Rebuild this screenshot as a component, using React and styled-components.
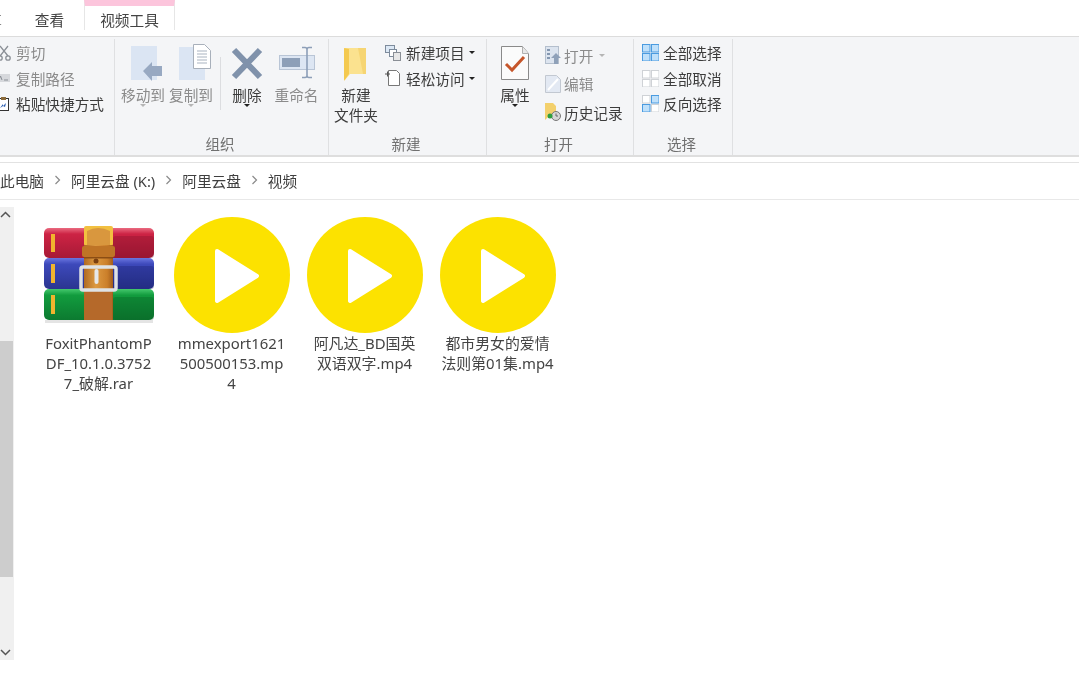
import React from 'react';
import styled, { createGlobalStyle } from 'styled-components';

const GlobalStyle = createGlobalStyle`
  html, body {
    margin: 0;
    padding: 0;
    background: #fff;
    overflow: hidden;
  }
  body {
    font-family: "Noto Sans", "Noto Sans CJK SC", sans-serif;
    font-size: 14.67px;
    color: #3c3c3c;
  }
`;

const Page = styled.div`
  width: 1079px;
  height: 673px;
  overflow: hidden;
  filter: blur(0.35px);
`;

const TabBar = styled.div`
  height: 36px;
  display: flex;
  align-items: stretch;
`;

const Tab = styled.div`
  width: ${p => p.$w}px;
  height: 30px;
  box-sizing: border-box;
  text-align: center;
  line-height: 40px;
  color: #444;
  ${p => p.$context && `
    border-top: 6px solid #fcc5dc;
    border-left: 1px solid #e6e6e6;
    border-right: 1px solid #e6e6e6;
    line-height: 28px;
  `}
`;

const ClippedTab = styled.div`
  width: 22px;
  height: 30px;
  box-sizing: border-box;
  display: flex;
  justify-content: flex-end;
  padding-right: 20px;
  line-height: 40px;
  white-space: nowrap;
  color: #888;
`;

const Ribbon = styled.div`
  height: 121px;
  box-sizing: border-box;
  display: flex;
  padding-top: 2px;
  background: #f4f5f7;
  border-top: 1px solid #dcdcdc;
  border-bottom: 2px solid #dedede;
`;

const Group = styled.div`
  width: ${p => p.$w}px;
  flex: none;
  box-sizing: border-box;
  display: flex;
  flex-direction: column;
  border-right: 1px solid #dfe0e2;
`;

const GroupBody = styled.div`
  flex: 1;
  display: flex;
  align-items: flex-start;
  padding-left: ${p => p.$pad || 0}px;
`;

const Caption = styled.div`
  height: 21px;
  padding-right: 3px;
  line-height: 20px;
  text-align: center;
  font-size: 14.5px;
  color: #707070;
`;

const LargeButton = styled.div`
  width: ${p => p.$w}px;
  flex: none;
  display: flex;
  flex-direction: column;
  align-items: center;
  margin-left: ${p => p.$left || 0}px;
  padding-top: 5px;
  line-height: 20px;
  white-space: nowrap;
  color: ${p => (p.$off ? '#8b8b8b' : '#3c3c3c')};
  svg {
    display: block;
    margin-bottom: 1px;
  }
`;

const Caret = styled.span`
  width: 0;
  height: 0;
  margin-top: -1px;
  border-left: 3px solid transparent;
  border-right: 3px solid transparent;
  border-top: 3px solid ${p => (p.$off ? '#b5b5b5' : '#222')};
`;

const InlineCaret = styled(Caret)`
  margin: 0 0 0 ${p => p.$gap}px;
`;

const VSep = styled.div`
  width: 1px;
  height: 53px;
  flex: none;
  margin: 18px 0 0 7px;
  background: #dcdde0;
`;

const SmallColumn = styled.div`
  display: flex;
  flex-direction: column;
  margin-left: ${p => p.$left || 0}px;
  padding-top: ${p => p.$top || 1}px;
`;

const SmallRow = styled.div`
  height: ${p => p.$h || 25.5}px;
  display: flex;
  align-items: center;
  gap: ${p => p.$gap || 3}px;
  white-space: nowrap;
  color: ${p => (p.$off ? '#8b8b8b' : '#3c3c3c')};
  svg {
    flex: none;
    display: block;
    margin-left: ${p => p.$shift || 0}px;
  }
`;

const AddressGap = styled.div`
  height: 5px;
`;

const AddressBar = styled.div`
  height: 36px;
  display: flex;
  align-items: center;
  border-top: 1px solid #e2e2e2;
  border-bottom: 1px solid #e8e8e8;
  color: #3f3f3f;
  span {
    margin-top: -2px;
  }
`;

const Crumb = styled.svg`
  width: 27px;
  height: 10px;
  flex: none;
  margin-top: -2px;
`;

const Content = styled.div`
  display: flex;
  align-items: flex-start;
  padding-top: 7px;
`;

const ScrollBar = styled.div`
  width: 14px;
  height: 453px;
  flex: none;
  display: flex;
  flex-direction: column;
  background: #f0f0f0;
`;

const ScrollArrow = styled.div`
  height: ${p => p.$h}px;
  display: flex;
  align-items: ${p => p.$align};
  padding: 4px 0;
  box-sizing: border-box;
  svg {
    display: block;
  }
`;

const ScrollThumb = styled.div`
  width: 13px;
  height: 236px;
  background: #cdcdcd;
`;

const FileGrid = styled.div`
  display: flex;
  padding: 10px 0 0 18px;
`;

const FileItem = styled.div`
  width: 133px;
  display: flex;
  flex-direction: column;
  align-items: center;
  svg {
    display: block;
  }
`;

const FileName = styled.div`
  text-align: center;
  line-height: 20px;
  color: #444;
  white-space: nowrap;
  font-size: 14.9px;
  span {
    display: block;
  }
`;

const ScissorsIcon = () => (
  <svg width="16" height="16" viewBox="0 0 16 16" fill="none" stroke="#8a8f96" strokeWidth="1.3">
    <path d="M3 1l8 10M11 1L3 11" />
    <circle cx="3" cy="13" r="2.2" />
    <circle cx="11" cy="13" r="2.2" />
  </svg>
);

const PathIcon = () => (
  <svg width="16" height="16" viewBox="0 0 16 16">
    <rect x="0" y="4" width="13" height="8" fill="#d6d8dc" />
    <path d="M2 10l1.5-4L5 10M7 10h4" stroke="#8a8f96" fill="none" />
  </svg>
);

const ShortcutIcon = () => (
  <svg width="16" height="16" viewBox="0 0 16 16">
    <rect x="1.5" y="2.5" width="10" height="12" fill="#fff" stroke="#333" />
    <rect x="4" y="1" width="5" height="3" fill="#8a6a3a" />
    <path d="M3 12l3-4 0 2 3-3-1 4-2-1z" fill="#2a5db0" />
  </svg>
);

const MoveIcon = () => (
  <svg width="44" height="40" viewBox="0 0 44 40">
    <rect x="10" y="2" width="26" height="34" fill="#dbe5f3" />
    <path d="M22 27l9-9v4h10v10H31v5z" fill="#98a9c2" />
  </svg>
);

const CopyIcon = () => (
  <svg width="44" height="40" viewBox="0 0 44 40">
    <rect x="10" y="3" width="26" height="33" fill="#dbe5f3" />
    <path d="M24.5 .5h11l6 6v18h-17z" fill="#fff" stroke="#a8b0bb" />
    <path d="M28 7h10M28 10h10M28 13h10M28 16h10M28 19h10" stroke="#a9b3c0" />
  </svg>
);

const DeleteIcon = () => (
  <svg width="52" height="40" viewBox="0 0 52 40">
    <path d="M13 6l26 27M39 6L13 33" stroke="#8092ab" strokeWidth="6" />
  </svg>
);

const RenameIcon = () => (
  <svg width="47" height="40" viewBox="0 0 47 40">
    <rect x="6.5" y="11.5" width="35" height="14" fill="#dde6f3" stroke="#b9c5d6" />
    <rect x="9" y="14" width="18" height="9" fill="#8d9fb8" />
    <path d="M29 3.500h3q2 0 2 2v26q0 2-2 2h-3M39 3.500h-3q-2 0-2 2v26q0 2 2 2h3" fill="none" stroke="#8d9fb8" strokeWidth="1.600" />
  </svg>
);

const FolderIcon = () => (
  <svg width="44" height="40" viewBox="0 0 44 40">
    <path d="M11 4h21v26H16l-5 6z" fill="#fbe28f" />
    <path d="M24 4h8v26h-3z" fill="#f6d573" />
    <path d="M10 4l5 1v25l-5 7z" fill="#f4c94f" />
  </svg>
);

const NewItemIcon = () => (
  <svg width="16" height="16" viewBox="0 0 16 16">
    <rect x=".5" y=".5" width="9" height="7" fill="#dce8f5" stroke="#7d8b9c" />
    <rect x="4.500" y="4.500" width="7" height="7" fill="#fff" stroke="#7d8b9c" />
    <rect x="8.500" y="7.500" width="7" height="8" fill="#e8e8e8" stroke="#8a8f96" />
  </svg>
);

const EasyAccessIcon = () => (
  <svg width="16" height="18" viewBox="0 0 16 18" fill="none">
    <path d="M3.500 1.500h8l3 3v12h-11z" fill="#fff" stroke="#777" />
    <path d="M0 5h5M2.500 2.500v5" stroke="#555" />
  </svg>
);

const PropertiesIcon = () => (
  <svg width="32" height="40" viewBox="0 0 32 40">
    <path d="M2.500 2.500h21l6 7v26h-27z" fill="#fbfbfb" stroke="#8a8a8a" />
    <path d="M23.500 2.500v7h6" fill="#e8e8e8" stroke="#b0b0b0" />
    <path d="M7 20l6 6L25 13" fill="none" stroke="#c6562b" strokeWidth="3" />
  </svg>
);

const OpenIcon = () => (
  <svg width="16" height="18" viewBox="0 0 16 18">
    <rect x=".5" y=".5" width="13" height="17" fill="#dce4ef" stroke="#b4bfcd" />
    <path d="M2 4h3M2 8h3M2 12h3" stroke="#8497b0" strokeWidth="2" />
    <path d="M11 7l5 5h-3v6H9v-6H6z" fill="#8fa1b9" />
  </svg>
);

const EditIcon = () => (
  <svg width="16" height="18" viewBox="0 0 16 18">
    <path d="M.5 .5h11l4 4v13H.5z" fill="#e3e9f3" stroke="#c2c8d1" />
    <path d="M3 15L13 4" stroke="#fff" strokeWidth="2" />
  </svg>
);

const HistoryIcon = () => (
  <svg width="16" height="18" viewBox="0 0 16 18">
    <path d="M0 0h8l3 3v11H3l-3 3z" fill="#f3d06c" />
    <circle cx="11" cy="13" r="4.500" fill="#d6d6d6" stroke="#777" />
    <circle cx="5" cy="13" r="2.500" fill="#2f9e3f" />
    <path d="M11 10.500V13h2" stroke="#666" fill="none" />
  </svg>
);

const GridIcon = ({ fills, stroke }) => (
  <svg width="17" height="17" viewBox="0 0 17 17">
    {[[0, 0], [9, 0], [0, 9], [9, 9]].map(([x, y], i) => (
      <rect key={i} x={x + 0.5} y={y + 0.5} width="7.500" height="7.500" fill={fills[i]} stroke={stroke[i]} />
    ))}
  </svg>
);

const RarBook = ({ y, h, grad, dark }) => (
  <g>
    <rect x="3" y={y} width="110" height={h} rx="5" fill={`url(#${grad})`} />
    <rect x="72" y={y + 8} width="41" height={h - 8} rx="3" fill={dark} opacity=".3" />
    <rect x="10" y={y + 6} width="4" height={h - 12} fill="#f1b42e" />
  </g>
);

const RarIcon = () => (
  <svg width="116" height="116" viewBox="0 0 116 116">
    <defs>
      <linearGradient id="redBook" x1="0" y1="0" x2="0" y2="1">
        <stop offset="0" stopColor="#ea6a80" />
        <stop offset=".2" stopColor="#cd2344" />
        <stop offset="1" stopColor="#a71a36" />
      </linearGradient>
      <linearGradient id="blueBook" x1="0" y1="0" x2="0" y2="1">
        <stop offset="0" stopColor="#6a76e0" />
        <stop offset=".2" stopColor="#3d49bb" />
        <stop offset="1" stopColor="#2b3590" />
      </linearGradient>
      <linearGradient id="greenBook" x1="0" y1="0" x2="0" y2="1">
        <stop offset="0" stopColor="#44c86c" />
        <stop offset=".2" stopColor="#129c3e" />
        <stop offset="1" stopColor="#0c7a30" />
      </linearGradient>
      <linearGradient id="belt" x1="0" y1="0" x2="1" y2="0">
        <stop offset="0" stopColor="#b06a22" />
        <stop offset=".4" stopColor="#dd9a42" />
        <stop offset=".8" stopColor="#cb7f2a" />
        <stop offset="1" stopColor="#a25d1c" />
      </linearGradient>
    </defs>
    <RarBook y={11} h={30} grad="redBook" dark="#7a0f28" />
    <RarBook y={41} h={31} grad="blueBook" dark="#151c66" />
    <RarBook y={72} h={31} grad="greenBook" dark="#065a20" />
    <rect x="43" y="9" width="29" height="20" rx="2" fill="#f2c040" />
    <path d="M46 14q11-6 23 0v14H46z" fill="#d9973e" />
    <rect x="43" y="28" width="29" height="75" fill="url(#belt)" />
    <rect x="41" y="29" width="33" height="11" rx="2" fill="#bf7426" />
    <rect x="43" y="40" width="29" height="1.500" fill="#8b4d14" />
    <circle cx="55" cy="44" r="2.500" fill="#7a3f10" />
    <rect x="44" y="73" width="27" height="30" fill="#b5692a" />
    <rect x="40" y="50" width="35" height="23" rx="2" fill="none" stroke="#dfe2e5" strokeWidth="3.500" />
    <rect x="53.500" y="52" width="4" height="15" rx="2" fill="#e6e8ea" />
    <rect x="4" y="103" width="108" height="3" fill="#e4e4e4" />
  </svg>
);

const PlayIcon = () => (
  <svg width="116" height="116" viewBox="0 0 116 116">
    <circle cx="58" cy="58" r="58" fill="#fce200" />
    <path d="M43 34l40 25-40 25z" fill="#fff" stroke="#fff" strokeWidth="4" strokeLinejoin="round" />
  </svg>
);

const ChevronCrumb = () => (
  <Crumb viewBox="0 0 27 10">
    <path d="M11.500 1l4 4-4 4" fill="none" stroke="#8a8a8a" strokeWidth="1.200" />
  </Crumb>
);

const files = [
  { icon: <RarIcon />, lines: ['FoxitPhantomP', 'DF_10.1.0.3752', '7_破解.rar'] },
  { icon: <PlayIcon />, lines: ['mmexport1621', '500500153.mp', '4'] },
  { icon: <PlayIcon />, lines: ['阿凡达_BD国英', '双语双字.mp4'] },
  { icon: <PlayIcon />, lines: ['都市男女的爱情', '法则第01集.mp4'] },
];

const blue = '#4a9be0';
const pale = '#cfd2d6';

function App() {
  return (
    <Page>
      <GlobalStyle />
      <TabBar>
        <ClippedTab>共享</ClippedTab>
        <Tab $w={55}>查看</Tab>
        <Tab $w={7} />
        <Tab $w={91} $context>视频工具</Tab>
      </TabBar>
      <Ribbon>
        <Group $w={115}>
          <GroupBody>
            <SmallColumn>
              <SmallRow $off $shift={-3}><ScissorsIcon />剪切</SmallRow>
              <SmallRow $off $shift={-3}><PathIcon />复制路径</SmallRow>
              <SmallRow $shift={-3}><ShortcutIcon />粘贴快捷方式</SmallRow>
            </SmallColumn>
          </GroupBody>
        </Group>
        <Group $w={214}>
          <GroupBody $pad={6}>
            <LargeButton $w={44} $off><MoveIcon />移动到<Caret $off /></LargeButton>
            <LargeButton $w={44} $left={4} $off><CopyIcon />复制到<Caret $off /></LargeButton>
            <VSep />
            <LargeButton $w={52}><DeleteIcon />删除<Caret /></LargeButton>
            <LargeButton $w={47} $off><RenameIcon />重命名</LargeButton>
          </GroupBody>
          <Caption>组织</Caption>
        </Group>
        <Group $w={158}>
          <GroupBody $pad={5}>
            <LargeButton $w={44}><FolderIcon />新建<span>文件夹</span></LargeButton>
            <SmallColumn $left={7}>
              <SmallRow $gap={5}><NewItemIcon />新建项目<InlineCaret $gap={-1} /></SmallRow>
              <SmallRow $gap={5}><EasyAccessIcon />轻松访问<InlineCaret $gap={-1} /></SmallRow>
            </SmallColumn>
          </GroupBody>
          <Caption>新建</Caption>
        </Group>
        <Group $w={147}>
          <GroupBody $pad={12}>
            <LargeButton $w={32}><PropertiesIcon />属性<Caret /></LargeButton>
            <SmallColumn $left={14} $top={2}>
              <SmallRow $off $h={28.5}><OpenIcon />打开<InlineCaret $off $gap={3} /></SmallRow>
              <SmallRow $off $h={28.5}><EditIcon />编辑</SmallRow>
              <SmallRow $h={28.5}><HistoryIcon />历史记录</SmallRow>
            </SmallColumn>
          </GroupBody>
          <Caption>打开</Caption>
        </Group>
        <Group $w={99}>
          <GroupBody $pad={8}>
            <SmallColumn>
              <SmallRow $gap={4}>
                <GridIcon fills={['#bfe0fa', '#bfe0fa', '#bfe0fa', '#bfe0fa']} stroke={[blue, blue, blue, blue]} />全部选择
              </SmallRow>
              <SmallRow $gap={4}>
                <GridIcon fills={['#fff', '#fff', '#fff', '#fff']} stroke={[pale, pale, pale, pale]} />全部取消
              </SmallRow>
              <SmallRow $gap={4}>
                <GridIcon fills={['#fff', '#bfe0fa', '#bfe0fa', '#fff']} stroke={[pale, blue, blue, pale]} />反向选择
              </SmallRow>
            </SmallColumn>
          </GroupBody>
          <Caption>选择</Caption>
        </Group>
      </Ribbon>
      <AddressGap />
      <AddressBar>
        <span>此电脑</span><ChevronCrumb /><span>阿里云盘 (K:)</span><ChevronCrumb /><span>阿里云盘</span><ChevronCrumb /><span>视频</span>
      </AddressBar>
      <Content>
        <ScrollBar>
          <ScrollArrow $h={134} $align="flex-start">
            <svg width="12" height="8" viewBox="0 0 12 8"><path d="M1 6l4.500-4.500L10 6" fill="none" stroke="#555" strokeWidth="1.500" /></svg>
          </ScrollArrow>
          <ScrollThumb />
          <ScrollArrow $h={83} $align="flex-end">
            <svg width="12" height="8" viewBox="0 0 12 8"><path d="M1 2l4.500 4.500L10 2" fill="none" stroke="#555" strokeWidth="1.500" /></svg>
          </ScrollArrow>
        </ScrollBar>
        <FileGrid>
          {files.map((file, i) => (
            <FileItem key={i}>
              {file.icon}
              <FileName>
                {file.lines.map(line => <span key={line}>{line}</span>)}
              </FileName>
            </FileItem>
          ))}
        </FileGrid>
      </Content>
    </Page>
  );
}

export default App;
